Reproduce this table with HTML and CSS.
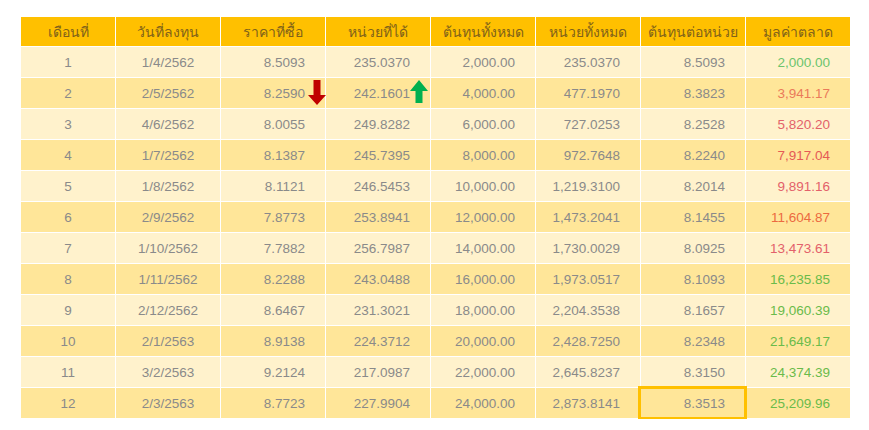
FILE: index.html
```html
<!DOCTYPE html>
<html lang="th">
<head>
<meta charset="utf-8">
<link rel="stylesheet" href="styles.css">
</head>
<body>
<div class="page">
<table class="dca">
<colgroup><col class="c1"><col><col><col><col><col><col><col></colgroup>
<thead>
<tr><th>เดือนที่</th><th>วันที่ลงทุน</th><th>ราคาที่ซื้อ</th><th>หน่วยที่ได้</th><th>ต้นทุนทั้งหมด</th><th>หน่วยทั้งหมด</th><th>ต้นทุนต่อหน่วย</th><th>มูลค่าตลาด</th></tr>
</thead>
<tbody>
<tr><td class="ctr">1</td><td class="ctr">1/4/2562</td><td>8.5093</td><td>235.0370</td><td>2,000.00</td><td>235.0370</td><td>8.5093</td><td class="g1">2,000.00</td></tr>
<tr><td class="ctr">2</td><td class="ctr">2/5/2562</td><td class="arr">8.2590<svg class="down" viewBox="0 0 18 25"><path d="M5.5 0h7v15h5.5l-9 10-9-10h5.5z"/></svg></td><td class="arr">242.1601<svg class="up" viewBox="0 0 18 23"><path d="M5.5 23h7v-12h5.5l-9-11-9 11h5.5z"/></svg></td><td>4,000.00</td><td>477.1970</td><td>8.3823</td><td class="r1">3,941.17</td></tr>
<tr><td class="ctr">3</td><td class="ctr">4/6/2562</td><td>8.0055</td><td>249.8282</td><td>6,000.00</td><td>727.0253</td><td>8.2528</td><td class="r2">5,820.20</td></tr>
<tr><td class="ctr">4</td><td class="ctr">1/7/2562</td><td>8.1387</td><td>245.7395</td><td>8,000.00</td><td>972.7648</td><td>8.2240</td><td class="r3">7,917.04</td></tr>
<tr><td class="ctr">5</td><td class="ctr">1/8/2562</td><td>8.1121</td><td>246.5453</td><td>10,000.00</td><td>1,219.3100</td><td>8.2014</td><td class="r2">9,891.16</td></tr>
<tr><td class="ctr">6</td><td class="ctr">2/9/2562</td><td>7.8773</td><td>253.8941</td><td>12,000.00</td><td>1,473.2041</td><td>8.1455</td><td class="r4">11,604.87</td></tr>
<tr><td class="ctr">7</td><td class="ctr">1/10/2562</td><td>7.7882</td><td>256.7987</td><td>14,000.00</td><td>1,730.0029</td><td>8.0925</td><td class="r2">13,473.61</td></tr>
<tr><td class="ctr">8</td><td class="ctr">1/11/2562</td><td>8.2288</td><td>243.0488</td><td>16,000.00</td><td>1,973.0517</td><td>8.1093</td><td class="g2">16,235.85</td></tr>
<tr><td class="ctr">9</td><td class="ctr">2/12/2562</td><td>8.6467</td><td>231.3021</td><td>18,000.00</td><td>2,204.3538</td><td>8.1657</td><td class="g2">19,060.39</td></tr>
<tr><td class="ctr">10</td><td class="ctr">2/1/2563</td><td>8.9138</td><td>224.3712</td><td>20,000.00</td><td>2,428.7250</td><td>8.2348</td><td class="g2">21,649.17</td></tr>
<tr><td class="ctr">11</td><td class="ctr">3/2/2563</td><td>9.2124</td><td>217.0987</td><td>22,000.00</td><td>2,645.8237</td><td>8.3150</td><td class="g2">24,374.39</td></tr>
<tr><td class="ctr">12</td><td class="ctr">2/3/2563</td><td>8.7723</td><td>227.9904</td><td>24,000.00</td><td>2,873.8141</td><td class="hl">8.3513<span class="box"></span></td><td class="g2">25,209.96</td></tr>
</tbody>
</table>
</div>
</body>
</html>
```
FILE: styles.css
```css
html, body {
  margin: 0;
  padding: 0;
  background: #ffffff;
}
.page {
  padding: 16px 0 0 20px;
}
.dca {
  border-collapse: collapse;
  table-layout: fixed;
  width: 831px;
  font-family: "Liberation Sans", Arial, "Noto Sans", sans-serif;
  font-size: 13.5px;
  color: #8a8a8a;
}
.dca col { width: 105px; }
.dca col.c1 { width: 95px; }
.dca th, .dca td {
  border: 1px solid #ffffff;
  padding: 0 20px 0 0;
  text-align: right;
  white-space: nowrap;
}
.dca th {
  background: #ffc000;
  color: #80621a;
  font-weight: normal;
  font-size: 14px;
  height: 29px;
  text-align: center;
  padding: 0;
  font-family: "Noto Sans", "DejaVu Sans", sans-serif;
}
.dca td {
  height: 30px;
}
.dca tbody tr:nth-child(odd) td { background: #fff2cc; }
.dca tbody tr:nth-child(even) td { background: #ffe699; }
.dca td.ctr { text-align: center; padding: 0; }
.arr { position: relative; }
.arr svg {
  position: absolute;
}
.arr svg.down { right: -1px; top: 2px; width: 18px; height: 25px; fill: #c00000; }
.arr svg.up { right: 2px; top: 2px; width: 18px; height: 23px; fill: #00b050; }
.hl { position: relative; }
.box {
  position: absolute;
  left: -3px;
  right: -2px;
  top: -2px;
  bottom: -2px;
  border: 3px solid #ffc000;
}
.g1 { color: #6cc46c; }
.g2 { color: #6abb4a; }
.r1 { color: #ea7a5a; }
.r2 { color: #e3616a; }
.r3 { color: #e55a55; }
.r4 { color: #ec6a40; }
```
